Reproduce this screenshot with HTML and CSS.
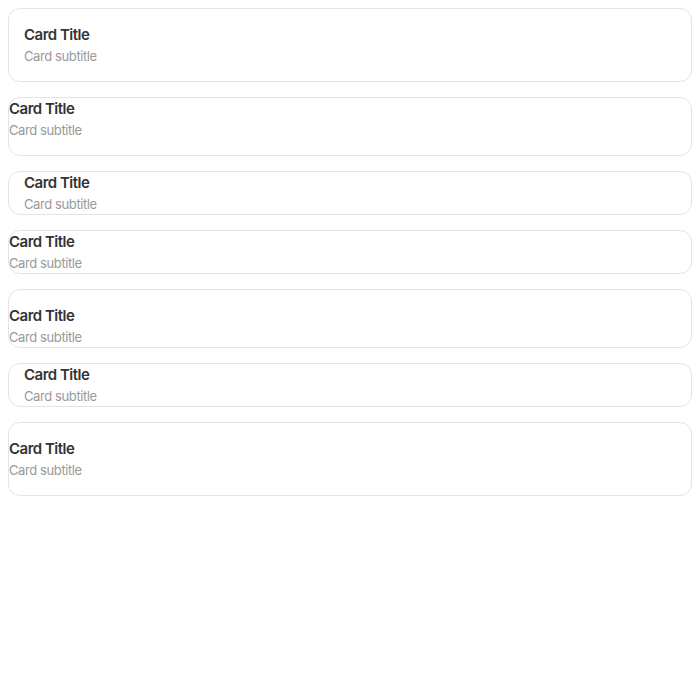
FILE: index.html
```html
<!DOCTYPE html>
<html>
<head>
<meta charset="utf-8">
<link rel="stylesheet" href="styles.css">
</head>
<body>
<div class="list">
  <div class="card pad-all"><div class="title">Card Title</div><div class="sub">Card subtitle</div></div>
  <div class="card pad-bottom"><div class="title">Card Title</div><div class="sub">Card subtitle</div></div>
  <div class="card pad-x"><div class="title">Card Title</div><div class="sub">Card subtitle</div></div>
  <div class="card"><div class="title">Card Title</div><div class="sub">Card subtitle</div></div>
  <div class="card pad-top"><div class="title">Card Title</div><div class="sub">Card subtitle</div></div>
  <div class="card pad-x"><div class="title">Card Title</div><div class="sub">Card subtitle</div></div>
  <div class="card pad-y"><div class="title">Card Title</div><div class="sub">Card subtitle</div></div>
</div>
</body>
</html>
```
FILE: styles.css
```css
body {
  margin: 8px;
  font-family: Inter, "Noto Sans", sans-serif;
  background: #fff;
}
.list {
  display: flex;
  flex-direction: column;
  gap: 15px;
}
.card {
  border: 1px solid #e4e4e4;
  border-radius: 12px;
  padding: 0;
}
.pad-all { padding: 15px; }
.pad-bottom { padding-bottom: 15px; }
.pad-x { padding-left: 15px; padding-right: 15px; }
.pad-top { padding-top: 15px; }
.pad-y { padding-top: 15px; padding-bottom: 15px; }
.title {
  font-size: 15px;
  line-height: 22px;
  font-weight: 600;
  letter-spacing: -0.5px;
  color: #333;
}
.sub {
  font-size: 13px;
  line-height: 20px;
  letter-spacing: -0.4px;
  color: #999;
}
```
